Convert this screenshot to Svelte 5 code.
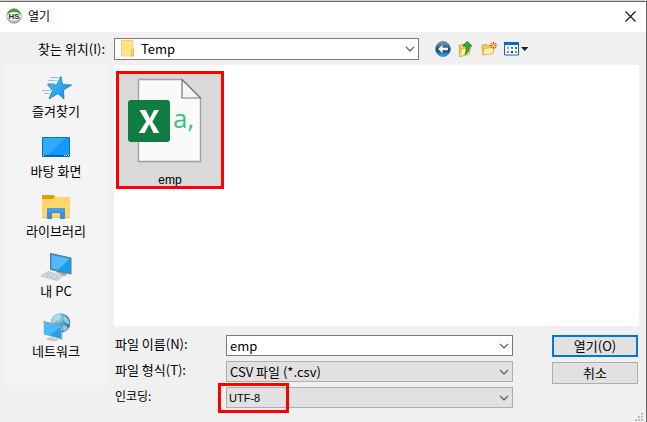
<script>
  let folder = $state('Temp');
  let fileName = $state('emp');
  let fileType = $state('CSV 파일 (*.csv)');
  let encoding = $state('UTF-8');
</script>

{#snippet chevron()}
  <svg class="chevron" width="10" height="6" viewBox="0 0 10 6" aria-hidden="true">
    <path d="M1 .8 5 4.8 9 .8" fill="none" stroke="#505050" stroke-width="1.2" />
  </svg>
{/snippet}

<main class="dialog">
  <header class="titlebar">
    <svg width="16" height="16" viewBox="0 0 16 16" aria-hidden="true">
      <defs>
        <linearGradient id="ring" x1="0" y1="0" x2="0" y2="1">
          <stop offset="0" stop-color="#2f9e22" />
          <stop offset=".35" stop-color="#48ad38" />
          <stop offset=".5" stop-color="#e8ece6" />
          <stop offset="1" stop-color="#a8aaa8" />
        </linearGradient>
      </defs>
      <circle cx="8" cy="8" r="7.2" fill="url(#ring)" stroke="#7f8a7c" stroke-width=".8" />
      <ellipse cx="8" cy="8.2" rx="6.8" ry="4.2" fill="#f2f5f1" />
      <text x="8" y="11" text-anchor="middle" font-family="Liberation Sans, sans-serif" font-size="8" font-weight="700" fill="#263322">HS</text>
    </svg>
    <h1>열기</h1>
    <button class="close" aria-label="닫기">
      <svg width="11" height="11" viewBox="0 0 11 11"><path d="M.5.5l10 10M10.500.5l-10 10" stroke="#111" stroke-width="1.1" /></svg>
    </button>
  </header>

  <div class="lookup">
    <label for="folder">찾는 위치(I):</label>
    <div class="combo white">
      <svg class="folder" width="14" height="17" viewBox="0 0 14 17" aria-hidden="true">
        <path d="M.5.500h11.500v15.500h-11.500z" fill="#ffe48d" stroke="#f3cf66" />
        <path d="M10.500 9.500h2v6.500h-2z" fill="#ffe38a" stroke="#e5b93f" />
      </svg>
      <select id="folder" bind:value={folder}><option>Temp</option></select>
      {@render chevron()}
    </div>
    <nav class="tools">
      <button aria-label="뒤로">
        <svg width="16" height="16" viewBox="0 0 16 16">
          <defs>
            <linearGradient id="orb" x1="0" y1="0" x2="0" y2="1">
              <stop offset="0" stop-color="#8ba0b8" />
              <stop offset=".4" stop-color="#2c5c94" />
              <stop offset=".6" stop-color="#0b4480" />
              <stop offset="1" stop-color="#32bdf0" />
            </linearGradient>
          </defs>
          <circle cx="8" cy="8" r="7.4" fill="url(#orb)" stroke="#4c6d90" stroke-width=".8" />
          <path d="M3 8 7.500 3.800v2.900H13v2.600H7.500v2.900z" fill="#fff" />
        </svg>
      </button>
      <button aria-label="상위 폴더">
        <svg width="16" height="16" viewBox="0 0 16 16">
          <path d="M1 4.500 5 3l1 1 5-.5v9L2 15.500z" fill="#f0cd58" stroke="#b99528" stroke-width=".7" />
          <path d="M3.500 8l9.500-2-2 7.500L1.500 15.500z" fill="#fff0a0" stroke="#c8a53a" stroke-width=".7" />
          <path d="M9 .5 13.800 5h-2.500c.3 3.500-.6 6.500-4.300 8.500 1.500-3 1.500-5.500 1-8.500H5z" fill="#32b52c" stroke="#147218" stroke-width=".9" />
        </svg>
      </button>
      <button aria-label="새 폴더">
        <svg width="16" height="16" viewBox="0 0 16 16">
          <path d="M1 4.500 5 3l1.500 1.500L12 4v8L2 14z" fill="#f0cb5b" stroke="#c19c32" stroke-width=".7" />
          <path d="M3.500 7.500 13.500 6 12 12.500 2 14z" fill="#fff1a5" stroke="#d0ac43" stroke-width=".7" />
          <path d="M12.500.7v7.600M8.700 4.500h7.600M9.800 1.800l5.400 5.400M15.200 1.800 9.800 7.200" stroke="#f0512c" stroke-width="1.100" />
          <circle cx="12.500" cy="4.500" r="1.500" fill="#ffd75b" />
        </svg>
      </button>
      <button class="view" aria-label="보기 메뉴">
        <svg width="26" height="16" viewBox="0 0 26 16">
          <path d="M.5 1.500h14v12.500H.5z" fill="#fff" stroke="#0869cf" />
          <path d="M0 1h15v3H0z" fill="#0869cf" />
          <path d="M3 6h2v2H3z" fill="#a9a3bb" /><path d="M7 6h2v2H7z" fill="#7278b8" /><path d="M11 6h2v2h-2z" fill="#168b30" />
          <path d="M3 10h2v2H3z" fill="#ee5a49" /><path d="M7 10h2v2H7z" fill="#133aa0" /><path d="M11 10h2v2h-2z" fill="#b98b18" />
          <path d="M17 6h7.500l-3.800 4z" fill="#222" />
        </svg>
      </button>
    </nav>
  </div>

  <div class="body">
    <nav class="places">
      <a href="#favorites">
        <svg width="32" height="26" viewBox="0 0 32 26" aria-hidden="true">
          <defs>
            <linearGradient id="blue" x1="0" y1="0" x2="1" y2="1">
              <stop offset="0" stop-color="#59c2fb" /><stop offset="1" stop-color="#078bea" />
            </linearGradient>
          </defs>
          <path d="M10 2.500h10M8 5.500h9M8 8.500h7M2 15.500h9M4 18.500h5" stroke="#8dc6ec" stroke-width="1" />
          <path d="m21 1.500 1.500 8 9 .5-8 5 .5 9-6-5.500L9 24l3.500-8.500L7.500 9.500l9 .5z" fill="url(#blue)" stroke="#1477b8" stroke-width=".8" />
        </svg>
        <span>즐겨찾기</span>
      </a>
      <a href="#desktop">
        <svg width="32" height="26" viewBox="0 0 32 26" aria-hidden="true">
          <path d="M2.500 2.500h27v19h-27z" fill="#129bfa" stroke="#0b70b5" />
          <path d="M3 3h22L8 20H3z" fill="#31a9fc" />
          <path d="M3 20h26v1H3z" fill="#075b9e" />
          <path d="M3 20.500h1M24 20.500h1M26 20.500h1M28 20.500h1" stroke="#fff" />
        </svg>
        <span>바탕 화면</span>
      </a>
      <a href="#libraries">
        <svg width="32" height="26" viewBox="0 0 32 26" aria-hidden="true">
          <path d="M2 0h12l1 2v4H2z" fill="#dfa000" />
          <path d="M2 4h11l2-2h14q1 0 1 1v20H2z" fill="#ffd667" />
          <path d="M2 22h28v1H2z" fill="#efbf4b" />
          <path d="M7 13h18v11h-5v-6h-8v6H7z" fill="#378ed4" />
          <path d="M7 13h18v4H7z" fill="#4a9de0" />
        </svg>
        <span>라이브러리</span>
      </a>
      <a href="#pc">
        <svg width="32" height="28" viewBox="0 0 32 28" aria-hidden="true">
          <path d="m18 16 7 3 2 3-3 1-8-4z" fill="#9da5aa" />
          <path d="M10.500.500 31 5v16l-20.500-4.500z" fill="#159df2" stroke="#67757f" />
          <path d="M11.500 2 29.500 6 18 17l-6.500-1.500z" fill="#53baf8" />
          <path d="m8 18.500 15 4.500-6 4.500-16-4.500z" fill="#e5e7e8" stroke="#a8afb4" stroke-width=".7" />
          <path d="m6 20 14 4.500M4 21.500l14 5M11 19.500l-5 5M15 20.500l-5 5M19 22l-5 5" stroke="#b1b7bb" stroke-width=".8" />
        </svg>
        <span>내 PC</span>
      </a>
      <a href="#network">
        <svg width="32" height="28" viewBox="0 0 32 28" aria-hidden="true">
          <defs>
            <radialGradient id="globe" cx=".35" cy=".25" r=".8">
              <stop offset="0" stop-color="#b4e3f3" /><stop offset=".5" stop-color="#4d9fc4" /><stop offset="1" stop-color="#14668f" />
            </radialGradient>
          </defs>
          <circle cx="20.500" cy="10" r="9.800" fill="url(#globe)" />
          <path d="m13 4 6-3 3 2-2 3-4 1-2 4-3-1zM24 3l4 3 2 6-4-2-3-4zM23 12l4 1 1 3-4 3-2-3z" fill="#b8dfeb" opacity=".75" />
          <path d="m11 23 6 1 2 2-5 2-7-2 4-1z" fill="#cbd1d4" stroke="#8c969b" stroke-width=".5" />
          <path d="m3.500 8.500 18 5v13l-18-5z" fill="#249fef" stroke="#dce4e8" />
          <path d="m4 9 17 5-11 8-6-1.500z" fill="#4cb8fb" />
          <path d="m3.300 8.300 18.500 5v13.500" fill="none" stroke="#61747f" stroke-width=".7" />
        </svg>
        <span>네트워크</span>
      </a>
    </nav>

    <div class="main">
      <section class="files" aria-label="파일 목록">
        <button class="file">
          <svg width="76" height="88" viewBox="0 0 76 88" aria-hidden="true">
            <path d="M10.500 2.500H54L72.500 21v63.500h-62z" fill="#fafafa" stroke="#a0a0a0" stroke-width="1.400" />
            <path d="M54 2.500V21h18.500z" fill="#f6f6f6" stroke="#777" stroke-width="1.200" stroke-linejoin="round" />
            <rect x="0" y="23" width="42" height="42" rx="3" fill="#107c41" />
            <path d="M11.500 33h6.300l4 8.500 4.300-8.500H31l-6.600 11.500L31.500 56H25.500l-4.300-9-4.500 9h-6l7.500-11.500z" fill="#fff" />
            <text x="45" y="51" font-family="Open Sans, sans-serif" font-size="26" fill="#33c481">a,</text>
          </svg>
          <span>emp</span>
        </button>
      </section>

      <form class="form" onsubmit={(e) => e.preventDefault()}>
        <div class="fields">
          <label for="name">파일 이름(N):</label>
          <div class="combo white">
            <input id="name" type="text" bind:value={fileName} />
            {@render chevron()}
          </div>
          <label for="type">파일 형식(T):</label>
          <div class="combo">
            <select id="type" bind:value={fileType}><option>CSV 파일 (*.csv)</option></select>
            {@render chevron()}
          </div>
          <label for="encoding" class="small">인코딩:</label>
          <div class="combo small">
            <select id="encoding" bind:value={encoding}><option>UTF-8</option></select>
            {@render chevron()}
            <i class="mark"></i>
          </div>
        </div>
        <div class="actions">
          <button class="primary">열기(O)</button>
          <button type="button">취소</button>
        </div>
      </form>
    </div>
  </div>

  <svg class="grip" width="8" height="8" viewBox="0 0 8 8" aria-hidden="true">
    <path d="M6 0h2v2H6zM3 3h2v2H3zM6 3h2v2H6zM0 6h2v2H0zM3 6h2v2H3zM6 6h2v2H6z" fill="#bcbcbc" />
  </svg>
</main>

<style>
  :global(body) { margin: 0; background: #d2d0ce; }
  .dialog, .dialog * { box-sizing: border-box; }
  .dialog {
    position: relative;
    min-height: calc(100vh - 1px);
    margin-top: 1px;
    border-top: 1px solid #666;
    border-right: 1px solid #666;
    background: #f0f0f0;
    color: #000;
    font: 13px/16px "Noto Sans CJK KR", sans-serif;
  }
  button, input, select { font: inherit; color: inherit; margin: 0; }
  button { padding: 0; border: 0; background: none; }
  .titlebar {
    display: flex;
    align-items: center;
    gap: 6px;
    height: 30px;
    padding: 0 10px 2px 6px;
    background: #fff;
  }
  h1 { margin: 0; font-size: 12px; line-height: 16px; font-weight: 400; }
  .close { display: flex; margin-left: auto; }
  .lookup { display: flex; align-items: center; height: 33px; padding: 0 7px 0 5px; }
  .lookup label { width: 109px; padding-right: 9px; text-align: right; flex: none; }
  .lookup .combo { flex: 0 1 305px; height: 22px; }
  .folder { position: absolute; left: 7px; top: 2px; }
  .combo { position: relative; height: 21px; min-width: 0; }
  .combo select, .combo input {
    display: block;
    width: 100%;
    height: 100%;
    padding: 0 24px 0 3px;
    border: 1px solid #adadad;
    border-radius: 0;
    background: #e1e1e1;
    appearance: none;
    outline: 0;
  }
  .combo.white select, .combo.white input { background: #fff; border-color: #7a7a7a; }
  .lookup .combo select { padding-left: 26px; }
  .chevron { position: absolute; right: 4px; top: 8px; pointer-events: none; }
  .tools { display: flex; gap: 7px; margin-left: 16px; }
  .tools button { display: flex; }
  .body { display: flex; gap: 7px; padding: 0 7px 0 5px; }
  .places {
    display: flex;
    flex-direction: column;
    flex: none;
    width: 102px;
    height: 320px;
    padding-top: 8px;
    background: #f4f4f4;
  }
  .places a {
    display: flex;
    flex-direction: column;
    align-items: center;
    justify-content: flex-end;
    gap: 2px;
    height: 60px;
    padding-bottom: 14px;
    color: inherit;
    text-decoration: none;
  }
  .places svg { flex: none; }
  .main { flex: 1; min-width: 0; }
  .files { height: 261px; padding: 6px 2px; background: #fff; }
  .file {
    display: flex;
    flex-direction: column;
    align-items: flex-start;
    width: 108px;
    height: 118px;
    padding: 3px 9px;
    border: 3px solid #f00;
    background: #d9d9d9;
    font-size: 12px;
  }
  .file svg { flex: none; }
  .file span { align-self: center; margin-top: 7px; font-family: "Liberation Sans", sans-serif; line-height: 16px; }
  .form { display: flex; gap: 39px; padding: 9px 1px 0; }
  .fields {
    display: grid;
    flex: 1;
    grid-template-columns: 111px minmax(0, 1fr);
    row-gap: 5px;
    align-items: start;
  }
  .fields label { line-height: 18px; }
  .small { font-size: 12px; }
  .combo.small { font-family: "Liberation Sans", sans-serif; font-size: 11px; }
  .combo.small select { padding-left: 2px; }
  .mark { position: absolute; left: -8px; top: -4px; width: 71px; height: 30px; border: 3px solid #f00; pointer-events: none; }
  .actions { display: flex; flex-direction: column; gap: 5px; width: 86px; }
  .actions button { height: 22px; border: 1px solid #adadad; background: #e1e1e1; }
  .actions .primary { border: 2px solid #0078d7; }
  .grip { position: absolute; right: 3px; bottom: 1px; }
</style>
